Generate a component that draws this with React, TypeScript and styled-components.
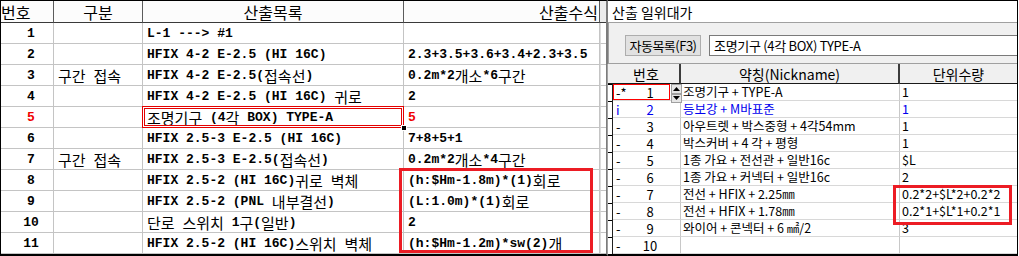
import React from "react";
import styled, { createGlobalStyle } from "styled-components";

const GlobalStyle = createGlobalStyle`
  html, body {
    margin: 0;
    padding: 0;
    background: #fff;
    overflow: hidden;
  }
`;

const HAN = /([\u1100-\u11ff\u3130-\u318f\uac00-\ud7af]+)/;

type SheetRow = {
  no: number;
  kind?: string;
  item: string;
  formula?: string;
  focus?: boolean;
};

const sheetRows: SheetRow[] = [
  { no: 1, item: "L-1 ---> #1" },
  { no: 2, item: "HFIX 4-2 E-2.5 (HI 16C)", formula: "2.3+3.5+3.6+3.4+2.3+3.5" },
  { no: 3, kind: "구간 접속", item: "HFIX 4-2 E-2.5(접속선)", formula: "0.2m*2개소*6구간" },
  { no: 4, item: "HFIX 4-2 E-2.5 (HI 16C) 귀로", formula: "2" },
  { no: 5, item: "조명기구 (4각 BOX) TYPE-A", formula: "5", focus: true },
  { no: 6, item: "HFIX 2.5-3 E-2.5 (HI 16C)", formula: "7+8+5+1" },
  { no: 7, kind: "구간 접속", item: "HFIX 2.5-3 E-2.5(접속선)", formula: "0.2m*2개소*4구간" },
  { no: 8, item: "HFIX 2.5-2 (HI 16C)귀로 벽체", formula: "(h:$Hm-1.8m)*(1)회로" },
  { no: 9, item: "HFIX 2.5-2 (PNL 내부결선)", formula: "(L:1.0m)*(1)회로" },
  { no: 10, item: "단로 스위치 1구(일반)", formula: "2" },
  { no: 11, item: "HFIX 2.5-2 (HI 16C)스위치 벽체", formula: "(h:$Hm-1.2m)*sw(2)개" },
];

type UnitRow = {
  mark: string;
  no: number;
  name: string;
  qty: string;
  active?: boolean;
  blue?: boolean;
};

const unitRows: UnitRow[] = [
  { mark: "-*", no: 1, name: "조명기구 + TYPE-A", qty: "1", active: true },
  { mark: "i", no: 2, name: "등보강 + M바표준", qty: "1", blue: true },
  { mark: "-", no: 3, name: "아우트렛 + 박스중형 + 4각54mm", qty: "1" },
  { mark: "-", no: 4, name: "박스커버 + 4 각 + 평형", qty: "1" },
  { mark: "-", no: 5, name: "1종 가요 + 전선관 + 일반16c", qty: "$L" },
  { mark: "-", no: 6, name: "1종 가요 + 커넥터 + 일반16c", qty: "2" },
  { mark: "-", no: 7, name: "전선 + HFIX + 2.25㎜", qty: "0.2*2+$L*2+0.2*2" },
  { mark: "-", no: 8, name: "전선 + HFIX + 1.78㎜", qty: "0.2*1+$L*1+0.2*1" },
  { mark: "-", no: 9, name: "와이어 + 콘넥터 + 6 ㎟/2", qty: "3" },
  { mark: "-", no: 10, name: "", qty: "" },
];

// korean runs get the CJK font, the rest stays bold mono like the grid font
const Mixed = ({ text }: { text: string }) => (
  <>
    {text.split(HAN).map((part, i) =>
      i % 2 === 1 ? <Han key={i}>{part}</Han> : <Latin key={i}>{part}</Latin>
    )}
  </>
);

const App = () => {
  return (
    <Page>
      <GlobalStyle />
      <LeftPanel>
        <Sheet>
          <HeadCell $align="left">번호</HeadCell>
          <HeadCell $align="center">구분</HeadCell>
          <HeadCell $align="center">산출목록</HeadCell>
          <HeadCell $align="right">산출수식</HeadCell>
          <HeadFill />
          {sheetRows.map((r) => (
            <React.Fragment key={r.no}>
              <Cell $align="center" $red={r.focus}>
                <Latin>{r.no}</Latin>
              </Cell>
              <Cell>{r.kind && <Mixed text={r.kind} />}</Cell>
              <Cell $focus={r.focus}>
                <Mixed text={r.item} />
              </Cell>
              <Cell $red={r.focus}>{r.formula && <Mixed text={r.formula} />}</Cell>
              <FillCell />
            </React.Fragment>
          ))}
        </Sheet>
        <LeftMark />
      </LeftPanel>

      <RightPanel>
        <Title>산출 일위대가</Title>
        <Toolbar>
          <ToolButton>자동목록(F3)</ToolButton>
          <NameField>조명기구 (4각 BOX) TYPE-A</NameField>
        </Toolbar>
        <List>
          <ListHead />
          <ListHead $sep>번호</ListHead>
          <ListHead $sep>약칭(Nickname)</ListHead>
          <ListHead>단위수량</ListHead>
          {unitRows.map((u) => (
            <React.Fragment key={u.no}>
              <MarkCell />
              <NoCell $blue={u.blue}>
                <NoBox $active={u.active}>
                  <Sym>{u.mark}</Sym>
                  <Num>{u.no}</Num>
                </NoBox>
                {u.active && (
                  <Spin>
                    <SpinBtn>
                      <svg width="7" height="4" viewBox="0 0 7 4">
                        <polygon points="0,4 3.5,0 7,4" fill="#000" />
                      </svg>
                    </SpinBtn>
                    <SpinBtn>
                      <svg width="7" height="4" viewBox="0 0 7 4">
                        <polygon points="0,0 7,0 3.5,4" fill="#000" />
                      </svg>
                    </SpinBtn>
                  </Spin>
                )}
              </NoCell>
              <TextCell $blue={u.blue}>{u.name}</TextCell>
              <TextCell $blue={u.blue} $last>
                {u.qty}
              </TextCell>
            </React.Fragment>
          ))}
        </List>
        <RightMark />
      </RightPanel>
    </Page>
  );
};

export default App;

const Page = styled.div`
  display: flex;
  width: 1019px;
  height: 256px;
  background: #fff;
`;

const Han = styled.span`
  font-family: "Noto Sans CJK KR", sans-serif;
  font-weight: 400;
  font-size: 15px;
  line-height: 1;
  white-space: pre;
`;

const Latin = styled.span`
  font-family: "Liberation Mono", "DejaVu Sans Mono", monospace;
  font-weight: 700;
  font-size: 13px;
  line-height: 1;
  white-space: pre;
`;

const LeftPanel = styled.div`
  position: relative;
  box-sizing: border-box;
  width: 608px;
  height: 256px;
  border-top: 1px solid #000;
  border-left: 1px solid #000;
  border-bottom: 2px solid #000;
  border-right: 2px solid #7c7c7c;
`;

const Sheet = styled.div`
  display: grid;
  grid-template-columns: 53px 89px 261px 196px 6px;
  grid-template-rows: 22px repeat(11, 21px);
`;

const HeadCell = styled.div<{ $align: "left" | "center" | "right" }>`
  box-sizing: border-box;
  display: flex;
  align-items: center;
  justify-content: ${({ $align }) =>
    $align === "left" ? "flex-start" : $align === "right" ? "flex-end" : "center"};
  padding: 0 ${({ $align }) => ($align === "right" ? "1px" : "0")};
  background: #fcfcfc;
  border-right: 1px solid #5c5c5c;
  border-bottom: 1px solid #3a3a3a;
  font-family: "Noto Sans CJK KR", sans-serif;
  font-size: 16px;
  line-height: 1;
  color: #000;
  white-space: nowrap;
`;

const HeadFill = styled.div`
  background: #ececec;
  border-bottom: 1px solid #3a3a3a;
`;

const Cell = styled.div<{ $align?: "center"; $focus?: boolean; $red?: boolean }>`
  position: relative;
  box-sizing: border-box;
  display: flex;
  align-items: center;
  justify-content: ${({ $align }) => ($align === "center" ? "center" : "flex-start")};
  padding-left: ${({ $align }) => ($align === "center" ? "8px" : "4px")};
  border-right: 1px solid #c4c4c4;
  border-bottom: 1px solid #c4c4c4;
  color: ${({ $red }) => ($red ? "#f00000" : "#000")};
  white-space: pre;

  ${({ $focus }) =>
    $focus &&
    `
    &::after {
      content: "";
      position: absolute;
      top: -1px;
      left: -1px;
      right: -1px;
      bottom: -1px;
      border: 3px double #e40000;
      pointer-events: none;
    }
    &::before {
      content: "";
      position: absolute;
      right: -4px;
      bottom: -4px;
      width: 4px;
      height: 4px;
      background: #000;
      border: 1px solid #fff;
      z-index: 2;
    }
  `}
`;

const FillCell = styled.div`
  box-sizing: border-box;
  border-bottom: 1px solid #c4c4c4;
  border-left: 1px solid #dcdcdc;
`;

const LeftMark = styled.div`
  position: absolute;
  left: 398px;
  top: 167px;
  width: 194px;
  height: 85px;
  box-sizing: border-box;
  border: 3px solid #ec1c24;
  pointer-events: none;
`;

const RightPanel = styled.div`
  position: relative;
  box-sizing: border-box;
  width: 410px;
  height: 256px;
  display: flex;
  flex-direction: column;
  border-top: 1px solid #000;
  border-right: 1px solid #000;
  border-bottom: 2px solid #000;
  font-family: "Noto Sans CJK KR", sans-serif;
  color: #000;
`;

const Title = styled.div`
  box-sizing: border-box;
  height: 22px;
  display: flex;
  align-items: center;
  padding-left: 4px;
  font-size: 14px;
  line-height: 1;
  background: #fff;
  border-bottom: 1px solid #a0a0a0;
`;

const Toolbar = styled.div`
  box-sizing: border-box;
  height: 41px;
  display: flex;
  align-items: flex-start;
  gap: 8px;
  padding: 12px 0 0 16px;
  background: #f0f0f0;
  border-left: 1px solid #a0a0a0;
  border-bottom: 1px solid #a0a0a0;
`;

const ToolButton = styled.div`
  box-sizing: border-box;
  height: 21px;
  width: 76px;
  display: flex;
  align-items: center;
  justify-content: center;
  background: #e1e1e1;
  border: 1px solid #adadad;
  font-size: 13px;
  letter-spacing: -0.5px;
  line-height: 1;
  white-space: nowrap;
`;

const NameField = styled.div`
  box-sizing: border-box;
  flex: 1;
  height: 21px;
  display: flex;
  align-items: center;
  padding-left: 4px;
  background: #fff;
  border: 1px solid #7a7a7a;
  border-right: none;
  font-size: 13px;
  letter-spacing: -0.3px;
  line-height: 1;
  white-space: pre;
`;

const List = styled.div`
  display: grid;
  grid-template-columns: 5px 68px 219px 1fr;
  grid-template-rows: 20px repeat(10, 17px);
  border-left: 1px solid #a0a0a0;
  margin-left: -1px;
`;

const ListHead = styled.div<{ $sep?: boolean }>`
  box-sizing: border-box;
  display: flex;
  align-items: center;
  justify-content: center;
  background: #f0f0f0;
  border-bottom: 1px solid #1a1a1a;
  border-right: ${({ $sep }) => ($sep ? "2px solid #3c3c3c" : "none")};
  font-size: 14px;
  line-height: 1;
  white-space: nowrap;
`;

const MarkCell = styled.div`
  position: relative;
  box-sizing: border-box;
  border-right: 1px solid #202020;

  &::before {
    content: "";
    position: absolute;
    top: 0;
    left: 0;
    width: 4px;
    border-top: 1px solid #000;
  }
`;

const NoCell = styled.div<{ $blue?: boolean }>`
  position: relative;
  box-sizing: border-box;
  display: flex;
  border-right: 1px solid #c8c8c8;
  border-bottom: 1px solid #d8d8d8;
  color: ${({ $blue }) => ($blue ? "#0000ee" : "#000")};
`;

const NoBox = styled.div<{ $active?: boolean }>`
  box-sizing: border-box;
  display: flex;
  align-items: center;
  width: ${({ $active }) => ($active ? "57px" : "100%")};
  height: 100%;
  border: 1px solid ${({ $active }) => ($active ? "#f00" : "transparent")};
  font-size: 13px;
  line-height: 1;
`;

const Sym = styled.span`
  width: 19px;
  padding-left: 2px;
  white-space: pre;
`;

const Num = styled.span`
  width: 30px;
  text-align: center;
`;

const Spin = styled.div`
  position: absolute;
  right: -2px;
  top: 0;
  width: 11px;
  height: 19px;
  display: flex;
  flex-direction: column;
  z-index: 2;
`;

const SpinBtn = styled.div`
  flex: 1;
  display: flex;
  align-items: center;
  justify-content: center;
  background: #e6e6e6;
  border: 1px solid #a0a0a0;
  box-sizing: border-box;
`;

const TextCell = styled.div<{ $blue?: boolean; $last?: boolean }>`
  box-sizing: border-box;
  display: flex;
  align-items: center;
  padding-left: 2px;
  border-right: ${({ $last }) => ($last ? "none" : "1px solid #c8c8c8")};
  border-bottom: 1px solid #d8d8d8;
  font-size: 12.5px;
  line-height: 1;
  color: ${({ $blue }) => ($blue ? "#0000ee" : "#000")};
  white-space: pre;
`;

const RightMark = styled.div`
  position: absolute;
  left: 285px;
  top: 184px;
  width: 119px;
  height: 40px;
  box-sizing: border-box;
  border: 3px solid #ec1c24;
  pointer-events: none;
`;
